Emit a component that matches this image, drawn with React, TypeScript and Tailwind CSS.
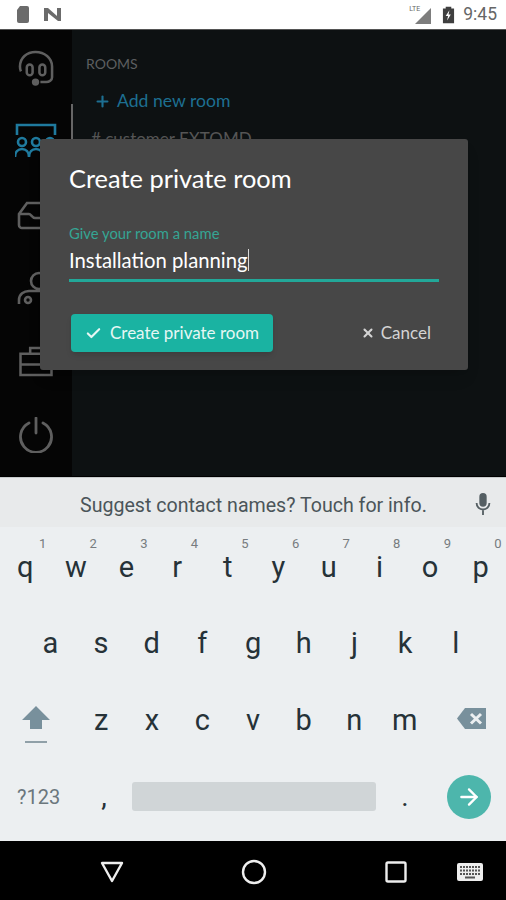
import { ArrowRight, Check, Plus, X } from "lucide-react";

const digits = ["1", "2", "3", "4", "5", "6", "7", "8", "9", "0"];

function Key({ label, hint }: { label: string; hint?: string }) {
  return (
    <div className="relative flex-1 flex items-center justify-center text-[29px] leading-none text-[#263238]">
      {label}
      {hint && (
        <span className="absolute top-[8px] right-[3px] w-[10px] text-center text-[13px] text-[#777c7f]">
          {hint}
        </span>
      )}
    </div>
  );
}

function Sidebar() {
  return (
    <div className="w-[72px] shrink-0 bg-[#050505] flex flex-col items-center pt-px text-[#5f5f5f]">
      <div className="h-[73.5px] flex items-center">
        <svg width="37" height="36" viewBox="0 0 38 37" fill="none" stroke="currentColor" strokeWidth="2.6">
          <path d="M3 22c-1-2-1-4-1-5C2 8 9 2 18 2s17 6 17 15v11c0 3-3 5-6 5h-6" />
          <rect x="9" y="15" width="6" height="11" rx="3" />
          <rect x="22" y="15" width="6" height="11" rx="3" />
          <circle cx="18" cy="33" r="2.5" fill="currentColor" />
        </svg>
      </div>
      <div className="h-[73.5px] flex items-center">
        <svg width="42" height="36" viewBox="0 0 42 36" fill="none" stroke="#1f7a9e" strokeWidth="2.6">
          <path d="M2 12V2h38v10" />
          <circle cx="7" cy="19" r="4" />
          <circle cx="21" cy="19" r="4" />
          <circle cx="35" cy="19" r="4" />
          <path d="M0 34c0-5 3-8 7-8s7 3 7 8M14 34c0-5 3-8 7-8s7 3 7 8M28 34c0-5 3-8 7-8s7 3 7 8" />
        </svg>
      </div>
      <div className="h-[73.5px] flex items-center">
        <svg width="38" height="30" viewBox="0 0 38 30" fill="none" stroke="currentColor" strokeWidth="2.6">
          <path d="M2 14 10 3h25v25H5a3 3 0 0 1-3-3Z" />
          <path d="M2 14h10c2 0 3 4 6 4h17" />
        </svg>
      </div>
      <div className="h-[73.5px] flex items-center">
        <svg width="38" height="35" viewBox="0 0 38 35" fill="none" stroke="currentColor" strokeWidth="2.6">
          <circle cx="22" cy="10" r="8" />
          <path d="M2 33v-4c0-6 5-9 10-9h14c5 0 10 3 10 9v4" />
          <circle cx="11" cy="29" r="3" />
        </svg>
      </div>
      <div className="h-[73.5px] flex items-center">
        <svg width="36" height="31" viewBox="0 0 36 32" fill="none" stroke="currentColor" strokeWidth="2.6">
          <path d="M2 8h32v22H2Z" />
          <path d="M12 8V2h14v6M2 19h32" />
        </svg>
      </div>
      <div className="h-[73.5px] flex items-center">
        <svg width="36" height="36" viewBox="0 0 36 36" fill="none" stroke="currentColor" strokeWidth="2.8" strokeLinecap="round">
          <path d="M11 6a15.500 15.500 0 1 0 14 0" />
          <path d="M18 1v15" />
        </svg>
      </div>
    </div>
  );
}

function Dialog() {
  return (
    <div className="absolute left-[40px] top-[109px] w-[428px] h-[231px] rounded-[3px] bg-[#474747] px-[29px] pt-[24px] shadow-lg">
      <h2 className="text-[25.4px] leading-[30px] text-white">Create private room</h2>
      <div className="mt-[32px] text-[14.8px] leading-[17px] text-[#35a594]">Give your room a name</div>
      <div className="mt-[5px] h-[35px] border-b-[3px] border-[#22a899] text-[20.3px] leading-[26px] text-white flex items-start">
        <span>Installation planning</span>
        <span className="mt-[2px] h-[22px] w-px bg-white/80" />
      </div>
      <div className="mt-[32px] flex items-center justify-between pl-[2px] pr-[8px]">
        <button className="h-[38px] w-[202px] rounded-[4px] bg-[#1ab3a2] shadow-md flex items-center gap-[8px] pl-[14px] text-[17px] text-[#e6f7f4]">
          <Check size={17} strokeWidth={3} />
          Create private room
        </button>
        <div className="flex items-center gap-[6px] text-[17px] text-[#d4d4d4]">
          <X size={14} strokeWidth={3.5} />
          Cancel
        </div>
      </div>
    </div>
  );
}

function Keyboard() {
  return (
    <div className="flex-1 flex flex-col bg-[#eceff1] font-['Roboto',sans-serif]">
      <div className="h-[50px] bg-[#e8eaeb] flex items-center pl-[80px] pr-[15px] justify-between border-t border-[#c8cccd] mb-[2px]">
        <span className="text-[19.6px] mt-[6px] text-[#4b5559]">Suggest contact names? Touch for info.</span>
        <svg width="16" height="22" viewBox="0 0 16 24" className="mt-[2px]">
          <rect x="4" y="0" width="8" height="15" rx="4" fill="#555f63" />
          <path d="M1 11c0 4 3 7 7 7s7-3 7-7M8 18v6" fill="none" stroke="#555f63" strokeWidth="2" />
        </svg>
      </div>
      <div className="h-[76.5px] flex">
        {"qwertyuiop".split("").map((k, i) => (
          <Key key={k} label={k} hint={digits[i]} />
        ))}
      </div>
      <div className="h-[76.5px] flex px-[25px]">
        {"asdfghjkl".split("").map((k) => (
          <Key key={k} label={k} />
        ))}
      </div>
      <div className="h-[76.5px] flex items-center">
        <div className="w-[76px] flex flex-col items-center pt-[8px]">
          <svg width="30" height="38" viewBox="0 0 30 38" className="-ml-[5px]">
            <path d="M15 1 1 15h8v9h12v-9h8Z" fill="#78909c" />
            <path d="M4 37h22" stroke="#90a0a8" strokeWidth="2" />
          </svg>
        </div>
        <div className="flex flex-1">
          {"zxcvbnm".split("").map((k) => (
            <Key key={k} label={k} />
          ))}
        </div>
        <div className="w-[76px] flex justify-end pr-[19px] -mt-[2px]">
          <svg width="30" height="24" viewBox="0 0 30 24">
            <path d="M8 1h21v21H8L0 11.500Z" fill="#78909c" />
            <path d="m14 7 10 9.500m0-9.500-10 9.500" stroke="#eceff1" strokeWidth="3" />
          </svg>
        </div>
      </div>
      <div className="h-[76.5px] flex items-center">
        <div className="w-[76px] pl-[17px] text-[20px] text-[#6b777d]">?123</div>
        <div className="w-[56px] text-center text-[28px] text-[#263238]">,</div>
        <div className="h-[29px] w-[244px] rounded-[3px] bg-[#d0d5d7]" />
        <div className="w-[58px] text-center text-[28px] text-[#263238]">.</div>
        <div className="w-[44px] h-[44px] ml-[13px] rounded-full bg-[#4db6ac] flex items-center justify-center text-white">
          <ArrowRight size={26} strokeWidth={2.2} />
        </div>
      </div>
    </div>
  );
}

export default function App() {
  return (
    <div className="h-[900px] w-[506px] flex flex-col overflow-hidden bg-black font-['Lato',sans-serif]">
      {/* status bar */}
      <div className="h-[30px] bg-white flex items-center justify-between pl-[16px] pr-[9px] border-b border-[#555]">
        <div className="flex items-center gap-[13px] text-[#6b6b6b]">
          <svg width="14" height="17" viewBox="0 0 14 17" fill="currentColor">
            <path d="M4 0h7a2 2 0 0 1 2 2v13a2 2 0 0 1-2 2H3a2 2 0 0 1-2-2V4Z" />
          </svg>
          <svg width="19" height="15" viewBox="0 0 19 15" fill="currentColor">
            <path d="M1 1h4l9 8V1h4v13h-3L5 6v8H1Z" />
          </svg>
        </div>
        <div className="flex items-center font-['Roboto',sans-serif] text-[#666]">
          <div className="relative w-[22px] h-[18px]">
            <svg width="22" height="18" viewBox="0 0 22 18" fill="currentColor">
              <path d="M21 2v16H5Z" opacity=".85" />
            </svg>
            <span className="absolute -left-px -top-[1px] text-[7px] leading-[8px] text-[#666]">LTE</span>
          </div>
          <svg width="13" height="18" viewBox="0 0 14 18" className="ml-[10px]">
            <path d="M4 0h6v2h3v16H1V2h3Z" fill="#3f3f3f" />
            <path d="M8 4 4 10h2.500L5.500 15l4-6.500H7Z" fill="#fff" />
          </svg>
          <span className="ml-[8px] text-[17.500px]">9:45</span>
        </div>
      </div>

      {/* app behind the dialog */}
      <div className="relative h-[447px] flex bg-[#0d1112] border-b border-black">
        <Sidebar />
        <div className="absolute left-[71px] top-[74px] h-[70px] w-[2px] bg-[#666]" />
        <div className="flex-1 pl-[14px] pt-[25px]">
          <div className="text-[14px] leading-[17px] text-[#5d5f60]">ROOMS</div>
          <div className="mt-[18px] flex items-center gap-[6px] pl-[8px] text-[17.6px] leading-[22px] text-[#1d6f91]">
            <Plus size={17} strokeWidth={3} />
            Add new room
          </div>
          <div className="mt-[16px] pl-[5px] text-[17px] leading-[22px] text-[#555]"># customer EXTOMD</div>
        </div>
        <Dialog />
      </div>

      <Keyboard />

      {/* nav bar */}
      <div className="relative h-[59px] bg-black">
        <svg width="24" height="22" viewBox="0 0 24 22" fill="none" stroke="#eee" strokeWidth="2.4" strokeLinejoin="round" className="absolute left-[100px] top-[20px]">
          <path d="M2 2h20L12 20Z" />
        </svg>
        <svg width="26" height="26" viewBox="0 0 26 26" fill="none" stroke="#eee" strokeWidth="2.4" className="absolute left-[241px] top-[18px]">
          <circle cx="13" cy="13" r="11" />
        </svg>
        <svg width="22" height="22" viewBox="0 0 22 22" fill="none" stroke="#eee" strokeWidth="2.4" className="absolute left-[385px] top-[20px]">
          <rect x="1.500" y="1.500" width="19" height="19" rx="1.500" />
        </svg>
        <svg width="26" height="18" viewBox="0 0 26 18" className="absolute left-[457px] top-[22px]">
          <rect width="26" height="18" rx="2" fill="#eee" />
          <path d="M3 4h20M3 7.500h20M3 11h20" stroke="#555" strokeWidth="1.800" strokeDasharray="2 1" />
          <path d="M8 14.500h10" stroke="#555" strokeWidth="2" />
        </svg>
      </div>
    </div>
  );
}
